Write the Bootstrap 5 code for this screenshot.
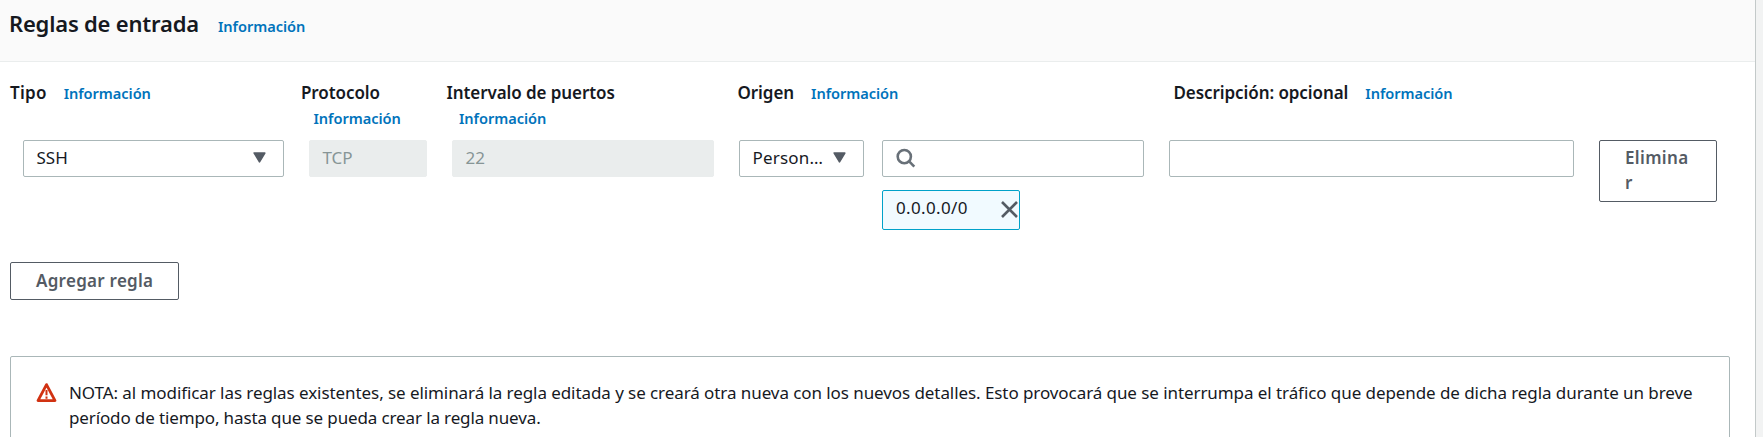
<!DOCTYPE html>
<html lang="es">
<head>
<meta charset="utf-8">
<meta name="viewport" content="width=device-width, initial-scale=1">
<title>Reglas de entrada</title>
<link href="https://cdn.jsdelivr.net/npm/bootstrap@5.3.0/dist/css/bootstrap.min.css" rel="stylesheet">
<style>
body{background:#f2f3f3;color:#16191f;font:17px/25px "Noto Sans","Open Sans",sans-serif;overflow:hidden}
.panel{width:1756px;height:437px;background:#fff;border-right:1px solid #c3c9c9;overflow:hidden}
.panel-head{height:62px;background:#fafafa;border-bottom:1px solid #eaeded;padding:10px 0 0 9px}
h2{font-size:22px;line-height:27px;font-weight:600;letter-spacing:-.2px;margin:0;width:209px}
.info{font-size:14.6px;line-height:25px;font-weight:600;color:#0073bb;text-decoration:none;letter-spacing:-.05px}
.lbl{font-weight:600;white-space:nowrap;letter-spacing:-.08px}
.lbl .info{margin-left:17px}
.lbl.tipo{letter-spacing:.25px}
.heads{display:grid;grid-template-columns:291px 145.5px 291px 436px 1fr;padding:18px 0 0 10px;height:78px}
.lbl .sub{display:block;margin:1px 0 0 12.5px}
.fields{display:grid;grid-template-columns:261px 118px 262px 405px 405px 118px;column-gap:25px;padding-left:23px;height:122px;align-items:start}
.origin{display:grid;grid-template-columns:125px 262px;column-gap:18px;row-gap:13px}
.box{height:37px;border:1px solid #aab7b8;border-radius:2px;padding:0 13px 2px 12.5px;background:#fff;white-space:nowrap}
.off{background:#eaeded;border-color:#eaeded;color:#879596}
.person{letter-spacing:.2px}
.act{border:1px solid #545b64;border-radius:2px;color:#545b64;font-weight:600;background:#fff;padding:4px 25px 6px;line-height:25px;letter-spacing:.35px;text-align:left}
.add{margin-left:10px;height:38px;width:169px;white-space:nowrap;letter-spacing:.27px}
.token{grid-column:2;width:138px;height:40px;border:1px solid #00a1c9;border-radius:2px;background:#f1faff;padding:0 1px 5px 13px;letter-spacing:.35px}
.token svg{margin-top:4px}
.note{width:1720px;height:110px;margin:56px 0 0 10px;border:1px solid #aab7b8;border-radius:2px;padding:23px 25px;gap:12px;letter-spacing:-.074px}
.note svg{margin-top:2px}
.note p{white-space:nowrap}
.note .tail{letter-spacing:-.13px}
</style>
</head>
<body>
<main class="panel">
  <header class="panel-head d-flex align-items-start">
    <h2>Reglas de entrada</h2>
    <a class="info pt-1" href="#">Información</a>
  </header>
  <div class="heads">
    <div class="lbl tipo">Tipo<a class="info" href="#">Información</a></div>
    <div class="lbl">Protocolo<a class="info sub" href="#">Información</a></div>
    <div class="lbl">Intervalo de puertos<a class="info sub" href="#">Información</a></div>
    <div class="lbl">Origen<a class="info" href="#">Información</a></div>
    <div class="lbl">Descripción: opcional<a class="info" href="#">Información</a></div>
  </div>
  <div class="fields">
    <div class="box d-flex align-items-center justify-content-between" role="combobox"><span>SSH</span>
      <svg class="me-1" width="13" height="11" viewBox="0 0 13 11"><path d="M1.2 1h10.6L6.5 9.8z" fill="#545b64" stroke="#545b64" stroke-width="1.6" stroke-linejoin="round"/></svg></div>
    <div class="box off d-flex align-items-center">TCP</div>
    <div class="box off d-flex align-items-center">22</div>
    <div class="origin">
      <div class="box d-flex align-items-center justify-content-between" role="combobox"><span class="person">Person…</span>
        <svg class="me-1" width="13" height="11" viewBox="0 0 13 11"><path d="M1.2 1h10.6L6.5 9.8z" fill="#545b64" stroke="#545b64" stroke-width="1.6" stroke-linejoin="round"/></svg></div>
      <div class="box d-flex align-items-center"><svg width="20" height="20" viewBox="0 0 20 20" fill="none" stroke="#687078" stroke-width="2.6"><circle cx="8.3" cy="8.6" r="6.6"/><path d="M12.9 13.2l5.4 5.4"/></svg></div>
      <div class="token d-flex align-items-center justify-content-between"><span>0.0.0.0/0</span>
        <svg width="17" height="17" viewBox="0 0 17 17" stroke="#545b64" stroke-width="2.6"><path d="M1 1l15 15M16 1L1 16"/></svg></div>
    </div>
    <div class="box"></div>
    <button class="act" type="button">Elimina<br>r</button>
  </div>
  <button class="act add d-block" type="button">Agregar regla</button>
  <div class="note d-flex align-items-start">
    <svg class="flex-shrink-0" width="21" height="21" viewBox="0 0 21 21"><path d="M10.5 2.6L19 18.6H2z" fill="#fff" stroke="#d13212" stroke-width="2.8" stroke-linejoin="round"/><path d="M10.5 8v5.3M10.5 14.5v2.2" stroke="#d13212" stroke-width="2"/></svg>
    <p class="m-0">NOTA: al modificar las reglas existentes, se eliminará la regla editada y se creará otra nueva con los nuevos detalles. Esto provocará que se interrumpa el tráfico que depende de dicha regla durante un breve<br><span class="tail">período de tiempo, hasta que se pueda crear la regla nueva.</span></p>
  </div>
</main>
<script src="https://cdn.jsdelivr.net/npm/bootstrap@5.3.0/dist/js/bootstrap.bundle.min.js"></script>
</body>
</html>
